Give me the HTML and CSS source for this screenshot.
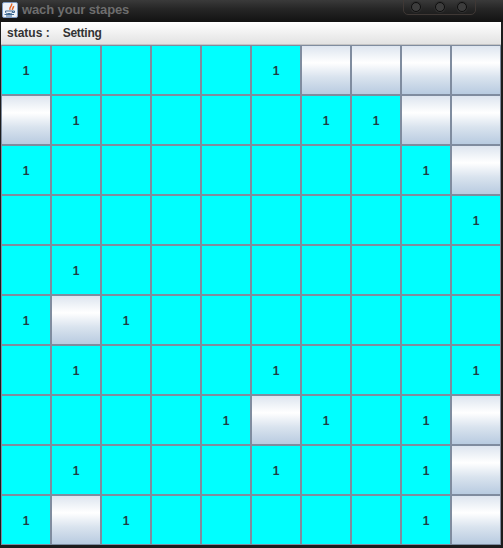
FILE: index.html
```html
<!DOCTYPE html>
<html lang="en">
<head>
<meta charset="utf-8">
<title>wach your stapes</title>
<link rel="stylesheet" href="styles.css">
</head>
<body>
<div class="window">
  <header class="titlebar">
    <svg class="app-icon" width="16" height="16" viewBox="0 0 16 16">
      <rect x="0.5" y="0.5" width="15" height="15" rx="1.5" fill="#eef3fa" stroke="#7f9cc4"/>
      <path d="M9.5 1.5 C11 4 6.5 5 8 8 M11.5 4 C12 5.5 10 6 10.5 8" fill="none" stroke="#e2692a" stroke-width="1.5"/>
      <path d="M3.5 9 H10.5 V10 C10.5 11 9.5 11.5 8.5 11.5 H5.5 C4.5 11.5 3.5 11 3.5 10 Z M10.5 9 H12.5 V10.5 H10.5" fill="none" stroke="#3e6a94" stroke-width="1"/>
      <path d="M2.5 12.5 H12 M4 14 H10" stroke="#3e6a94" stroke-width="1"/>
    </svg>
    <span class="title">wach your stapes</span>
    <div class="controls">
      <span class="dot"></span><span class="dot"></span><span class="dot"></span>
    </div>
  </header>
  <div class="content">
    <div class="status"><span class="status-label">status :</span><span class="status-value">Setting</span></div>
    <div class="grid">
      <div class="cell">1</div><div class="cell"></div><div class="cell"></div><div class="cell"></div><div class="cell"></div><div class="cell">1</div><div class="cell btn"></div><div class="cell btn"></div><div class="cell btn"></div><div class="cell btn"></div>
      <div class="cell btn"></div><div class="cell">1</div><div class="cell"></div><div class="cell"></div><div class="cell"></div><div class="cell"></div><div class="cell">1</div><div class="cell">1</div><div class="cell btn"></div><div class="cell btn"></div>
      <div class="cell">1</div><div class="cell"></div><div class="cell"></div><div class="cell"></div><div class="cell"></div><div class="cell"></div><div class="cell"></div><div class="cell"></div><div class="cell">1</div><div class="cell btn"></div>
      <div class="cell"></div><div class="cell"></div><div class="cell"></div><div class="cell"></div><div class="cell"></div><div class="cell"></div><div class="cell"></div><div class="cell"></div><div class="cell"></div><div class="cell">1</div>
      <div class="cell"></div><div class="cell">1</div><div class="cell"></div><div class="cell"></div><div class="cell"></div><div class="cell"></div><div class="cell"></div><div class="cell"></div><div class="cell"></div><div class="cell"></div>
      <div class="cell">1</div><div class="cell btn"></div><div class="cell">1</div><div class="cell"></div><div class="cell"></div><div class="cell"></div><div class="cell"></div><div class="cell"></div><div class="cell"></div><div class="cell"></div>
      <div class="cell"></div><div class="cell">1</div><div class="cell"></div><div class="cell"></div><div class="cell"></div><div class="cell">1</div><div class="cell"></div><div class="cell"></div><div class="cell"></div><div class="cell">1</div>
      <div class="cell"></div><div class="cell"></div><div class="cell"></div><div class="cell"></div><div class="cell">1</div><div class="cell btn"></div><div class="cell">1</div><div class="cell"></div><div class="cell">1</div><div class="cell btn"></div>
      <div class="cell"></div><div class="cell">1</div><div class="cell"></div><div class="cell"></div><div class="cell"></div><div class="cell">1</div><div class="cell"></div><div class="cell"></div><div class="cell">1</div><div class="cell btn"></div>
      <div class="cell">1</div><div class="cell btn"></div><div class="cell">1</div><div class="cell"></div><div class="cell"></div><div class="cell"></div><div class="cell"></div><div class="cell"></div><div class="cell">1</div><div class="cell btn"></div>
    </div>
  </div>
</div>
</body>
</html>
```
FILE: styles.css
```css
* { box-sizing: border-box; }
html, body { margin: 0; padding: 0; }
body {
  width: 503px;
  height: 548px;
  overflow: hidden;
  background: #1c1c1c;
  font-family: "Liberation Sans", Arial, sans-serif;
}
.window {
  display: flex;
  flex-direction: column;
  height: 548px;
}
.titlebar {
  position: relative;
  display: flex;
  align-items: center;
  gap: 4px;
  height: 22px;
  padding: 0 2px 3px 2px;
  background: linear-gradient(#3a3a3a, #262626 40%, #121212);
}
.app-icon { flex: none; }
.title {
  font-size: 13px;
  font-weight: bold;
  letter-spacing: -0.12px;
  color: #6e6e6e;
}
.controls {
  position: absolute;
  left: 403px;
  top: -2px;
  width: 73px;
  height: 17px;
  display: flex;
  align-items: center;
  padding: 0 0 0 7px;
  border: 1px solid #3f3835;
  border-radius: 0 0 5px 5px;
}
.dot {
  width: 10px;
  height: 10px;
  border-radius: 50%;
  background: #3d3d3d;
  border: 1px solid #0e0e0e;
  box-shadow: 0 0 0 1px #2e2e2e;
}
.dot + .dot { margin-left: 14px; }
.dot:last-child { margin-left: 12px; }
.content {
  width: 500px;
  margin-left: 1px;
}
.status {
  display: flex;
  align-items: center;
  gap: 13px;
  height: 23px;
  padding-left: 6px;
  font-size: 12px;
  font-weight: bold;
  color: #333333;
  background: linear-gradient(#ffffff, #e2e2e2);
  border-bottom: 1px solid #c4c4c4;
}
.status-value { letter-spacing: -0.25px; }
.grid {
  display: grid;
  grid-template-columns: repeat(10, 48px);
  grid-auto-rows: 48px;
  gap: 2px;
  padding: 1px;
  background: #7f8c9f;
}
.cell {
  display: flex;
  align-items: center;
  justify-content: center;
  padding-top: 2px;
  background: #00ffff;
  font-size: 12px;
  font-weight: bold;
  color: #223c44;
}
.btn {
  background: linear-gradient(#dde5ef, #ffffff 35%, #d9e3ee 65%, #b8cbe0);
}
```
